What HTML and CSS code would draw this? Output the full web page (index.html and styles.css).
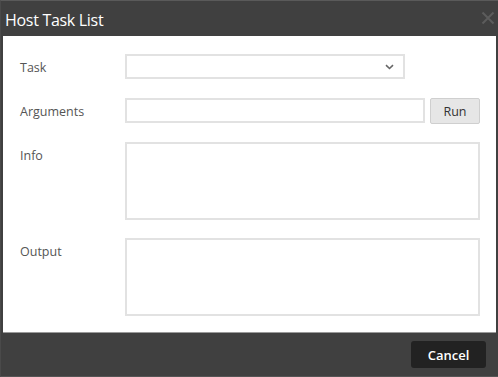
FILE: index.html
```html
<!DOCTYPE html>
<html>
<head>
<meta charset="utf-8">
<link rel="stylesheet" href="styles.css">
</head>
<body>
<div class="dialog">
  <div class="titlebar">
    <span class="title">Host Task List</span>
    <span class="close"><svg width="14" height="14" viewBox="0 0 14 14"><path d="M1.5 1.5L12.5 12.5M12.5 1.5L1.5 12.5" stroke="#5c5c5c" stroke-width="2" fill="none"/></svg></span>
  </div>
  <div class="content">
    <div class="row row-task">
      <label class="label">Task</label>
      <div class="select">
        <svg width="9" height="6" viewBox="0 0 9 6"><path d="M1 1.2l3.5 3.3L8 1.2" stroke="#666" stroke-width="1.6" fill="none"/></svg>
      </div>
    </div>
    <div class="row row-args">
      <label class="label">Arguments</label>
      <div class="input"></div>
      <button class="run">Run</button>
    </div>
    <div class="row row-info">
      <label class="label">Info</label>
      <div class="textarea"></div>
    </div>
    <div class="row row-output">
      <label class="label">Output</label>
      <div class="textarea"></div>
    </div>
  </div>
  <div class="footer">
    <button class="cancel">Cancel</button>
  </div>
</div>
</body>
</html>
```
FILE: styles.css
```css
html, body {
  margin: 0;
  padding: 0;
  background: #404040;
}
.dialog {
  width: 498px;
  height: 377px;
  box-sizing: border-box;
  background: #404040;
  border-top: 1px solid #5a5a5a;
  border-left: 1px solid #4a4a4a;
  border-bottom: 1px solid #555;
  display: flex;
  flex-direction: column;
  font-family: "Open Sans", sans-serif;
}
.titlebar {
  height: 35px;
  display: flex;
  align-items: center;
  justify-content: space-between;
  padding: 0 2px 0 4px;
}
.title {
  color: #fff;
  font-size: 16px;
  letter-spacing: -0.3px;
  position: relative;
  top: 1px;
}
.close {
  display: flex;
  width: 16px;
  height: 16px;
  align-items: center;
  justify-content: center;
  margin-top: -1px;
}
.content {
  margin: 0 2px 0 2px;
  height: 297px;
  background: #fff;
  border-bottom: 1px solid #9a9a9a;
  box-sizing: border-box;
  padding-top: 18px;
  display: flex;
  flex-direction: column;
}
.row {
  display: flex;
  align-items: flex-start;
}
.label {
  width: 105px;
  padding-left: 17px;
  padding-top: 3px;
  font-size: 12.5px;
  color: #555;
  line-height: 22px;
}
.select, .input, .textarea {
  box-sizing: border-box;
  border: 2px solid #e2e2e2;
  background: #fff;
}
.select {
  width: 280px;
  height: 25px;
  display: flex;
  align-items: center;
  justify-content: flex-end;
  padding-right: 9px;
}
.row-args {
  margin-top: 19px;
}
.input {
  width: 300px;
  height: 25px;
}
.run {
  margin-left: 5px;
  width: 50px;
  height: 26px;
  box-sizing: border-box;
  border: 1px solid #cfcfcf;
  border-radius: 2px;
  background: #e6e6e6;
  font-family: "Open Sans", sans-serif;
  font-size: 12.5px;
  color: #333;
  padding: 0;
}
.row-info {
  margin-top: 18px;
}
.textarea {
  width: 355px;
  height: 78px;
}
.row-output {
  margin-top: 18px;
}
.footer {
  flex: 1;
  display: flex;
  justify-content: flex-end;
  align-items: flex-start;
  padding: 8px 12px 0 0;
}
.cancel {
  width: 75px;
  height: 27px;
  background: #222;
  border: none;
  border-radius: 3px;
  color: #fff;
  font-family: "Open Sans", sans-serif;
  font-size: 13px;
  font-weight: 600;
  padding: 0;
}
```
